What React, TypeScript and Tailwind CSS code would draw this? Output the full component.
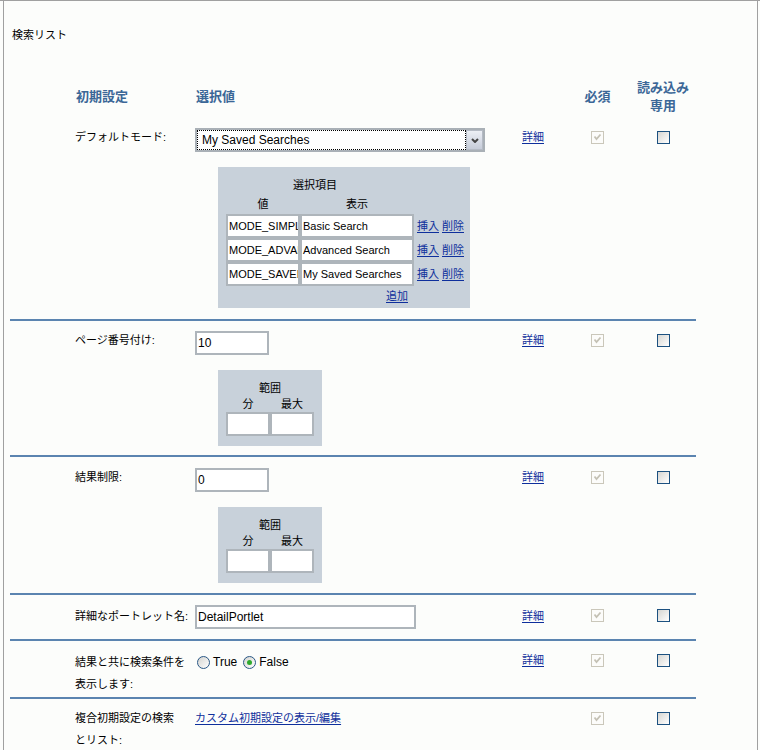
import React from "react";

const COLS = "grid grid-cols-[62px_120px_326px_47px_65px_66px]";
const ROW = `${COLS} border-b-2 border-[#5b84b0]`;

function Link({ children }: { children: React.ReactNode }) {
  return (
    <a href="#" className="text-[#0e2f9c] underline underline-offset-2">
      {children}
    </a>
  );
}

function ReqBox() {
  return (
    <span className="w-[13px] h-[13px] border border-[#cac7ba] bg-[#fcfcfa] flex items-center justify-center">
      <svg width="9" height="8" viewBox="0 0 9 8">
        <path d="M1.5 3.5 L3.5 6 L7.5 1.5" fill="none" stroke="#c4c1b4" strokeWidth="1.8" />
      </svg>
    </span>
  );
}

function RoBox() {
  return <span className="w-[13px] h-[13px] border border-[#1c5180] bg-linear-to-br from-[#d6d6d2] to-white" />;
}

function Radio({ on }: { on?: boolean }) {
  return (
    <span className="w-[13px] h-[13px] rounded-full border border-[#2a5886] bg-linear-to-br from-[#d4d4d0] to-white flex items-center justify-center">
      {on && <span className="w-[5px] h-[5px] rounded-full bg-[#2eaa2e]" />}
    </span>
  );
}

function TextBox({ w, value, small }: { w: string; value?: string; small?: boolean }) {
  return (
    <div
      className={`${w} h-[24px] border-2 border-[#aeb5bb] bg-white pl-[1px] ${
        small ? "text-[11px]" : "text-[12px]"
      } leading-[20px] whitespace-nowrap overflow-hidden`}
    >
      {value}
    </div>
  );
}

function Select() {
  return (
    <div className="w-[290px] h-[24px] border-2 border-[#a9b0b6] bg-white flex">
      <div className="flex-1 border border-dotted border-black pl-[4px] text-[12px] leading-[18px] whitespace-nowrap">
        My Saved Searches
      </div>
      <div className="w-[17px] h-full border border-[#b4bac4] bg-linear-to-b from-[#eceff5] to-[#c6ccd9] flex items-center justify-center">
        <svg width="8" height="5" viewBox="0 0 8 5">
          <path d="M1 1 L4 4 L7 1" fill="none" stroke="#444" strokeWidth="2" />
        </svg>
      </div>
    </div>
  );
}

const choices = [
  ["MODE_SIMPLE", "Basic Search"],
  ["MODE_ADVANCED", "Advanced Search"],
  ["MODE_SAVED", "My Saved Searches"],
];

function Choices() {
  return (
    <div className="w-[252px] h-[141px] bg-[#c8d1da] pt-[9px] pl-[8px] pr-[6px] text-[11px]">
      <div className="leading-[19px] pl-[67px]">選択項目</div>
      <div className="flex leading-[19px]">
        <div className="w-[74px] text-center">値</div>
        <div className="w-[114px] text-center">表示</div>
      </div>
      {choices.map(([v, d]) => (
        <div key={v} className="flex items-center">
          <TextBox w="w-[74px]" value={v} small />
          <TextBox w="w-[114px]" value={d} small />
          <span className="ml-[3px] flex gap-[3px] leading-[14px]">
            <Link>挿入</Link>
            <Link>削除</Link>
          </span>
        </div>
      ))}
      <div className="h-[20px] leading-[20px] pl-[160px]">
        <Link>追加</Link>
      </div>
    </div>
  );
}

function Range() {
  return (
    <div className="w-[104px] h-[76px] bg-[#c8d1da] pt-[10px] pl-[8px] text-[11px]">
      <div className="w-[88px] text-center leading-[16px]">範囲</div>
      <div className="flex leading-[16px]">
        <div className="w-[44px] text-center">分</div>
        <div className="w-[44px] text-center">最大</div>
      </div>
      <div className="flex">
        <TextBox w="w-[44px]" />
        <TextBox w="w-[44px]" />
      </div>
    </div>
  );
}

function Tail({ detail = true }: { detail?: boolean }) {
  return (
    <>
      <div className="pl-[4px] leading-[18px]">{detail && <Link>詳細</Link>}</div>
      <div className="h-[18px] flex items-center justify-center">
        <ReqBox />
      </div>
      <div className="h-[18px] flex items-center justify-center">
        <RoBox />
      </div>
    </>
  );
}

export default function App() {
  return (
    <div className="min-h-screen bg-[#fcfdfb] border-t border-[#a0a0a0] text-black text-[11px] font-['Liberation_Sans','Noto_Sans_CJK_JP',sans-serif]">
      <div className="ml-[3px] mr-[2px] min-h-[749px] border-l border-r border-[#a0a0a0]">
        <div className="pl-[8px] pt-[26px] leading-[16px]">検索リスト</div>

        <div className="ml-[6px] w-[686px]">
          {/* header */}
          <div className={`${COLS} mt-[36px] h-[36px] items-center text-[13px] font-bold text-[#3b6797]`}>
            <div />
            <div className="pl-[4px]">初期設定</div>
            <div className="pl-[4px]">選択値</div>
            <div />
            <div className="text-center">必須</div>
            <div className="text-center leading-[18px]">
              読み込み
              <br />
              専用
            </div>
          </div>

          {/* default mode */}
          <div className={`${ROW} pt-[13px] pb-[11px]`}>
            <div />
            <div className="pl-[3px] leading-[18px]">デフォルトモード:</div>
            <div className="pl-[3px]">
              <Select />
              <div className="mt-[15px] ml-[23px]">
                <Choices />
              </div>
            </div>
            <Tail />
          </div>

          {/* paging */}
          <div className={`${ROW} pt-[10px] pb-[9px]`}>
            <div />
            <div className="pl-[3px] leading-[18px]">ページ番号付け:</div>
            <div className="pl-[3px]">
              <TextBox w="w-[74px]" value="10" />
              <div className="mt-[15px] ml-[23px]">
                <Range />
              </div>
            </div>
            <Tail />
          </div>

          {/* result limit */}
          <div className={`${ROW} pt-[11px] pb-[10px]`}>
            <div />
            <div className="pl-[3px] leading-[18px]">結果制限:</div>
            <div className="pl-[3px]">
              <TextBox w="w-[74px]" value="0" />
              <div className="mt-[15px] ml-[23px]">
                <Range />
              </div>
            </div>
            <Tail />
          </div>

          {/* detail portlet */}
          <div className={`${ROW} pt-[10px] pb-[10px]`}>
            <div />
            <div className="pl-[3px] leading-[18px] pt-[2px]">詳細なポートレット名:</div>
            <div className="pl-[3px]">
              <TextBox w="w-[221px]" value="DetailPortlet" />
            </div>
            <div className="pt-[2px]">
              <div className="pl-[4px] leading-[18px]">
                <Link>詳細</Link>
              </div>
            </div>
            <div className="h-[18px] pt-[2px] flex items-center justify-center">
              <ReqBox />
            </div>
            <div className="h-[18px] pt-[2px] flex items-center justify-center">
              <RoBox />
            </div>
          </div>

          {/* show criteria */}
          <div className={`${ROW} pt-[10px] pb-[2px]`}>
            <div />
            <div className="pl-[3px] leading-[22px]">
              結果と共に検索条件を
              <br />
              表示します:
            </div>
            <div className="pl-[5px] h-[22px] flex items-center text-[12px]">
              <Radio />
              <span className="ml-[3px] mr-[6px]">True</span>
              <Radio on />
              <span className="ml-[3px]">False</span>
            </div>
            <div className="pl-[4px] leading-[18px]">
              <Link>詳細</Link>
            </div>
            <div className="h-[18px] flex items-center justify-center">
              <ReqBox />
            </div>
            <div className="h-[18px] flex items-center justify-center">
              <RoBox />
            </div>
          </div>

          {/* composite */}
          <div className={`${COLS} pt-[10px]`}>
            <div />
            <div className="pl-[3px] leading-[22px] -mt-[2px]">
              複合初期設定の検索
              <br />
              とリスト:
            </div>
            <div className="pl-[3px] leading-[18px]">
              <Link>カスタム初期設定の表示/編集</Link>
            </div>
            <Tail detail={false} />
          </div>
        </div>
      </div>
    </div>
  );
}
